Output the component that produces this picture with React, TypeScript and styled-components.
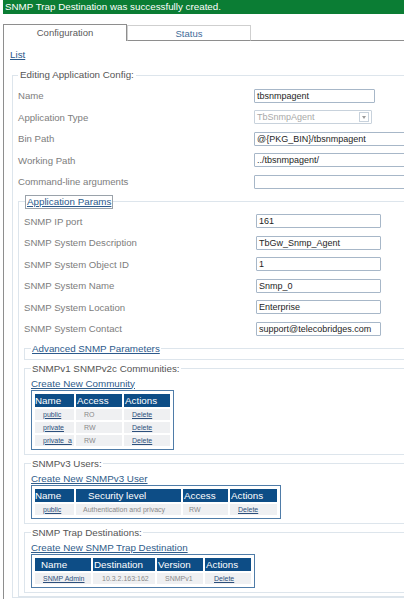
import React from "react";
import styled, { createGlobalStyle } from "styled-components";

const GlobalStyle = createGlobalStyle`
  html, body {
    margin: 0;
    padding: 0;
    background: #ffffff;
    overflow: hidden;
  }
  body {
    font-family: "Liberation Sans", Arial, sans-serif;
    font-size: 10px;
    color: #555;
  }
`;

const Page = styled.div`
  width: 440px;
`;

const Banner = styled.div`
  margin-left: 3px;
  height: 14px;
  line-height: 14px;
  padding-left: 2px;
  background: #0b7d34;
  color: #ffffff;
  font-size: 9.8px;
`;

const TabBar = styled.div`
  display: flex;
  margin-top: 10px;
  margin-left: 3px;
  height: 17px;
`;

const Tab = styled.div<{ $active?: boolean }>`
  box-sizing: border-box;
  width: 124px;
  line-height: 16px;
  text-align: center;
  font-size: 9.5px;
  background: #ffffff;
  color: ${(p) => (p.$active ? "#5a5a5a" : "#3f6b99")};
  border: 1px solid ${(p) => (p.$active ? "#8e8e8e" : "#cfcfcf")};
  border-bottom: ${(p) => (p.$active ? "none" : "1px solid #8e8e8e")};
  margin-top: ${(p) => (p.$active ? "0" : "1px")};
  height: ${(p) => (p.$active ? "17px" : "16px")};
`;

const TabFill = styled.div`
  flex: 1;
  border-bottom: 1px solid #8e8e8e;
`;

const Panel = styled.div`
  margin-left: 3px;
  border-left: 1px solid #8e8e8e;
  padding: 8px 0 0 6px;
  height: 600px;
`;

const Link = styled.a`
  color: #2c5a8c;
  text-decoration: underline;
  font-size: 9.8px;
  line-height: 12px;
  cursor: pointer;
`;

const TopLink = styled(Link)`
  display: block;
  height: 12px;
`;

const Box = styled.fieldset<{ $inset?: number }>`
  margin: 0;
  padding: 0 0 ${(p) => p.$inset ?? 0}px 5px;
  border: 1px solid #dde5ec;
  min-width: 0;
`;

const EditBox = styled(Box)`
  margin: 8px 0 0 2px;
`;

const ParamsBox = styled(Box)`
  margin-top: 2px;
  padding-bottom: 3px;
`;

const Legend = styled.legend`
  padding: 0 2px;
  font-size: 9.8px;
  line-height: 12px;
  color: #555;
`;

const LinkLegend = styled.legend`
  margin-left: 1px;
  padding: 0 1px;
  border: 1px solid #9aa2aa;
  line-height: 12px;
`;

const SubBox = styled(Box)`
  margin-top: 3px;
  padding: 0 0 4px 6px;
`;

const SubLegend = styled(Legend)`
  padding: 0 1px;
`;

const Body = styled.div<{ $top: number }>`
  padding-top: ${(p) => p.$top}px;
`;

const Row = styled.div<{ $label: number }>`
  display: grid;
  grid-template-columns: ${(p) => p.$label}px auto;
  align-items: center;
  height: 21.5px;
`;

const Label = styled.div`
  color: #7d7d7d;
  font-size: 9.6px;
`;

const TextInput = styled.div<{ $w: number }>`
  box-sizing: border-box;
  width: ${(p) => p.$w}px;
  height: 14px;
  line-height: 12px;
  padding-left: 2px;
  border: 1px solid #a7b7c8;
  border-radius: 1px;
  color: #1e1e1e;
  font-size: 9px;
  background: #fff;
  white-space: nowrap;
  overflow: hidden;
`;

const Select = styled(TextInput)`
  display: flex;
  align-items: center;
  justify-content: space-between;
  color: #a9a9a9;
  border-color: #c8d2dc;
  padding-right: 2px;
`;

const SelectArrow = styled.span`
  box-sizing: border-box;
  width: 10px;
  height: 10px;
  border: 1px solid #c8d2dc;
  display: flex;
  align-items: center;
  justify-content: center;
  &::after {
    content: "";
    border-left: 2.5px solid transparent;
    border-right: 2.5px solid transparent;
    border-top: 3px solid #9a9a9a;
  }
`;

const CreateLink = styled(Link)`
  display: block;
  margin-top: 3px;
  height: 12px;
  color: #2f5c8a;
`;

const Table = styled.table`
  border: 1px solid #4f7ca8;
  border-spacing: 2px;
  padding: 1px;
  table-layout: fixed;
  margin-top: 0;
`;

const Th = styled.th<{ $w: number; $indent?: number }>`
  width: ${(p) => p.$w}px;
  height: 13px;
  padding: 0 0 0 ${(p) => p.$indent ?? 0}px;
  background: #0d4d86;
  color: #ffffff;
  font-weight: normal;
  font-size: 9.8px;
  text-align: left;
  white-space: nowrap;
`;

const Td = styled.td<{ $pad?: number }>`
  height: 11px;
  padding: 0 0 0 ${(p) => p.$pad ?? 8}px;
  background: #eff0f2;
  color: #8a8a8a;
  font-size: 7px;
  line-height: 11px;
  white-space: nowrap;
  overflow: hidden;
`;

const CellLink = styled.a`
  color: #2c4f7c;
  text-decoration: underline;
`;

type Field = { label: string; value: string; w: number; select?: boolean };

const appFields: Field[] = [
  { label: "Name", value: "tbsnmpagent", w: 121 },
  { label: "Application Type", value: "TbSnmpAgent", w: 118, select: true },
  { label: "Bin Path", value: "@{PKG_BIN}/tbsnmpagent", w: 170 },
  { label: "Working Path", value: "../tbsnmpagent/", w: 170 },
  { label: "Command-line arguments", value: "", w: 170 },
];

const snmpFields: Field[] = [
  { label: "SNMP IP port", value: "161", w: 125 },
  { label: "SNMP System Description", value: "TbGw_Snmp_Agent", w: 125 },
  { label: "SNMP System Object ID", value: "1", w: 125 },
  { label: "SNMP System Name", value: "Snmp_0", w: 125 },
  { label: "SNMP System Location", value: "Enterprise", w: 125 },
  { label: "SNMP System Contact", value: "support@telecobridges.com", w: 125 },
];

const communities = [
  { name: "public", access: "RO" },
  { name: "private", access: "RW" },
  { name: "private_a", access: "RW" },
];

const FieldRows: React.FC<{ fields: Field[]; label: number }> = ({ fields, label }) => (
  <>
    {fields.map((f) => (
      <Row key={f.label} $label={label}>
        <Label>{f.label}</Label>
        {f.select ? (
          <Select $w={f.w}>
            {f.value}
            <SelectArrow />
          </Select>
        ) : (
          <TextInput $w={f.w}>{f.value}</TextInput>
        )}
      </Row>
    ))}
  </>
);

const App: React.FC = () => {
  return (
    <Page>
      <GlobalStyle />
      <Banner>SNMP Trap Destination was successfully created.</Banner>

      <TabBar>
        <Tab $active>Configuration</Tab>
        <Tab>Status</Tab>
        <TabFill />
      </TabBar>

      <Panel>
        <TopLink>List</TopLink>

        <EditBox>
          <Legend>Editing Application Config:</Legend>
          <Body $top={4}>
            <FieldRows fields={appFields} label={236} />
          </Body>

          <ParamsBox>
            <LinkLegend>
              <Link>Application Params</Link>
            </LinkLegend>
            <Body $top={2}>
              <FieldRows fields={snmpFields} label={232} />
            </Body>

            <SubBox $inset={6}>
              <SubLegend>
                <Link>Advanced SNMP Parameters</Link>
              </SubLegend>
            </SubBox>

            <SubBox>
              <SubLegend>SNMPv1 SNMPv2c Communities:</SubLegend>
              <CreateLink>Create New Community</CreateLink>
              <Table>
                <thead>
                  <tr>
                    <Th $w={39}>Name</Th>
                    <Th $w={45} $indent={1}>Access</Th>
                    <Th $w={45} $indent={1}>Actions</Th>
                  </tr>
                </thead>
                <tbody>
                  {communities.map((c) => (
                    <tr key={c.name}>
                      <Td><CellLink>{c.name}</CellLink></Td>
                      <Td>{c.access}</Td>
                      <Td><CellLink>Delete</CellLink></Td>
                    </tr>
                  ))}
                </tbody>
              </Table>
            </SubBox>

            <SubBox>
              <SubLegend>SNMPv3 Users:</SubLegend>
              <CreateLink>Create New SNMPv3 User</CreateLink>
              <Table>
                <thead>
                  <tr>
                    <Th $w={39}>Name</Th>
                    <Th $w={93} $indent={12}>Security level</Th>
                    <Th $w={44} $indent={1}>Access</Th>
                    <Th $w={46} $indent={1}>Actions</Th>
                  </tr>
                </thead>
                <tbody>
                  <tr>
                    <Td><CellLink>public</CellLink></Td>
                    <Td $pad={7}>Authentication and privacy</Td>
                    <Td $pad={6}>RW</Td>
                    <Td><CellLink>Delete</CellLink></Td>
                  </tr>
                </tbody>
              </Table>
            </SubBox>

            <SubBox>
              <SubLegend>SNMP Trap Destinations:</SubLegend>
              <CreateLink>Create New SNMP Trap Destination</CreateLink>
              <Table>
                <thead>
                  <tr>
                    <Th $w={50} $indent={6}>Name</Th>
                    <Th $w={61} $indent={1}>Destination</Th>
                    <Th $w={45} $indent={1}>Version</Th>
                    <Th $w={45} $indent={1}>Actions</Th>
                  </tr>
                </thead>
                <tbody>
                  <tr>
                    <Td $pad={8}><CellLink>SNMP Admin</CellLink></Td>
                    <Td $pad={9}>10.3.2.163:162</Td>
                    <Td $pad={8}>SNMPv1</Td>
                    <Td $pad={9}><CellLink>Delete</CellLink></Td>
                  </tr>
                </tbody>
              </Table>
            </SubBox>
          </ParamsBox>
        </EditBox>
      </Panel>
    </Page>
  );
};

export default App;
